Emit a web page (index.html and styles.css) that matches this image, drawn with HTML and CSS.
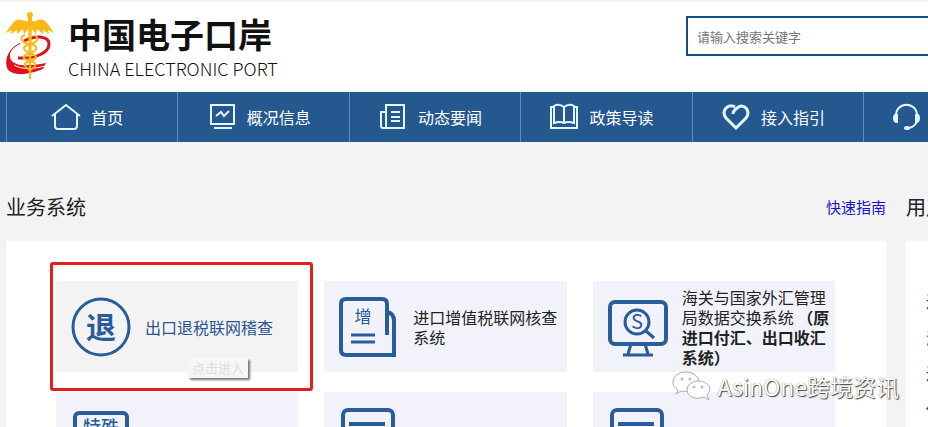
FILE: index.html
```html
<!DOCTYPE html>
<html lang="zh-CN">
<head>
  <meta charset="UTF-8">
  <meta name="viewport" content="width=device-width, initial-scale=1">
  <title>中国电子口岸</title>
  <link rel="stylesheet" href="styles.css">
</head>
<body>

<header class="header wrap">
  <a href="#" class="logo">
    <svg class="logo-mark" viewBox="0 0 48 68" width="48" height="68" aria-hidden="true">
      <path d="M14 32C5 36 2 43 5 48c5 7 18 6 35 3l-3 6C20 64 5 64 1 56-2 46 4 35 14 31z" fill="#e0101c"/>
      <path d="M18 29c12-6 25-5 25 3 0 9-14 15-31 14" fill="none" stroke="#e0101c" stroke-width="3"/>
      <path d="M8 53c8 5 20 4 31 1" fill="none" stroke="#fff" stroke-width="1"/>
      <path d="M24 6c1 4 4 4 8 2 6-2 9 2 16 13l-6-3 1 4-6-4v4l-6-5-1 5-6-7-6 7-1-5-6 5v-4l-6 4 1-4-6 3C7 10 10 6 16 8c4 2 7 2 8-2z" fill="#fbb917"/>
      <circle cx="24" cy="3" r="3" fill="#fbb917"/>
      <path d="M22 5h4l-1 62h-2z" fill="#fbb917"/>
      <path d="M19 23c-7 3-3 8 5 9s9 6 0 9-8 6 0 8 6 6 0 9M29 23c4 4 3 7-5 9s-8 6 0 9 8 6 0 8-6 6 0 9" fill="none" stroke="#fbb917" stroke-width="2"/>
    </svg>
    <span class="logo-text">
      <strong>中国电子口岸</strong>
      <span>CHINA ELECTRONIC PORT</span>
    </span>
  </a>
  <form class="search">
    <input type="text" placeholder="请输入搜索关键字" aria-label="请输入搜索关键字">
  </form>
</header>

<nav class="nav">
  <ul class="nav-list wrap">
    <li><a href="#">
      <svg class="nav-icon" viewBox="0 0 30 28"><path d="M1 13 15 2l14 11M4 11v12q0 3 3 3h16q3 0 3-3V11"/></svg>首页</a></li>
    <li><a href="#">
      <svg class="nav-icon" viewBox="0 0 30 28"><path d="M4 2h23v19H4zM7 25h18M9 13l5-4 3 4 5-5"/></svg>概况信息</a></li>
    <li><a href="#">
      <svg class="nav-icon" viewBox="0 0 30 28"><path d="M8 25V2h18v23H5q-2 0-2-2V9h5M13 9h9M13 14h9M13 18h9"/></svg>动态要闻</a></li>
    <li><a href="#">
      <svg class="nav-icon" viewBox="0 0 30 28"><path d="M5 4H2v21h26V4h-3M15 4Q10 0 5 3v17q6-2 10 0 4-2 10 0V3q-5-3-10 1v16"/></svg>政策导读</a></li>
    <li><a href="#">
      <svg class="nav-icon" viewBox="0 0 30 28"><path class="thick" d="M12 11q0-3 4-6 5-4 9 0 4 5 0 10L15 25 5 15Q1 10 5 5q4-4 9-1"/></svg>接入指引</a></li>
    <li class="service"><a href="#" aria-label="客服">
      <svg class="nav-icon" viewBox="0 0 30 28"><path d="M5 13C5-2 26-2 26 13M26 18q-2 6-8 7"/><path class="solid" d="M6 12v7q-3 0-3-4t3-3zM25 12v7q3 0 3-4t-3-3z"/><ellipse class="solid" cx="16" cy="25" rx="2" ry="1"/></svg></a></li>
  </ul>
</nav>

<div class="content wrap">
  <main>
    <div class="section-title">
      <h2>业务系统</h2>
      <a href="#">快速指南</a>
    </div>
    <div class="panel systems">
      <a href="#" class="system active">
        <svg class="system-icon" viewBox="0 0 60 60">
          <circle class="thin" cx="30" cy="30" r="28"/>
          <text x="30" y="41" font-size="30" font-weight="700">退</text>
        </svg>
        <span>出口退税联网稽查</span>
        <span class="tip">点击进入</span>
      </a>
      <a href="#" class="system">
        <svg class="system-icon" viewBox="0 0 60 60">
          <path d="M48 38V7q0-5-5-5H7Q2 2 2 7v46q0 5 5 5h48V24q0-8-7-9"/>
          <path class="thin" d="M12 38h24M12 45h24"/>
          <text x="24" y="26" font-size="17">增</text>
        </svg>
        <span>进口增值税联网核查系统</span>
      </a>
      <a href="#" class="system">
        <svg class="system-icon" viewBox="0 0 60 60">
          <rect x="2" y="5" width="56" height="42" rx="5"/>
          <path class="thin" d="M23 47l-3 10M37 47l3 10M15 58h30"/>
          <circle class="thin" cx="29" cy="25" r="12"/>
          <path class="thin" d="M38 34l8 7"/>
          <text x="29" y="32" font-size="20">S</text>
        </svg>
        <span>海关与国家外汇管理局数据交换系统 <b>（原进口付汇、出口收汇系统）</b></span>
      </a>
      <a href="#" class="system" aria-label="特殊">
        <svg class="system-icon" viewBox="0 0 60 60">
          <rect x="4" y="5" width="52" height="50" rx="4"/>
          <text x="30" y="26" font-size="18" font-weight="500">特殊</text>
        </svg>
      </a>
      <a href="#" class="system" aria-label="业务系统">
        <svg class="system-icon" viewBox="0 0 60 60">
          <rect x="4" y="2" width="50" height="56" rx="5"/>
          <path d="M10 16h36"/>
        </svg>
      </a>
      <a href="#" class="system" aria-label="业务系统">
        <svg class="system-icon" viewBox="0 0 60 60">
          <rect x="4" y="2" width="50" height="56" rx="5"/>
          <path d="M10 16h36"/>
        </svg>
      </a>
      <div class="highlight"></div>
    </div>
  </main>
  <aside>
    <div class="section-title">
      <h2>用户</h2>
    </div>
    <ul class="panel notices">
      <li>进</li>
      <li>海</li>
      <li>进</li>
      <li>传</li>
    </ul>
  </aside>
</div>

<div class="watermark">
  <svg viewBox="0 0 40 30" width="40" height="30" aria-hidden="true">
    <path d="M14 1C6 1 1 6 1 11c0 4 2 6 5 8l-2 4 5-3q4 1 7 0M14 1c7 0 12 4 13 9"/>
    <path d="M26 10c-6 0-11 4-11 9s7 11 17 7l5 3-2-5c7-7 0-14-9-14z"/>
    <circle cx="10" cy="8" r="1"/><circle cx="18" cy="8" r="1"/>
    <circle cx="22" cy="16" r="1"/><circle cx="30" cy="16" r="1"/>
  </svg>
  <span>AsinOne跨境资讯</span>
</div>

</body>
</html>
```
FILE: styles.css
```css
* {
  box-sizing: border-box;
}
body {
  margin: 0;
  height: 100vh;
  overflow: hidden;
  position: relative;
  background: #f3f3f3;
  color: #222;
  font-family: "Noto Sans CJK SC", sans-serif;
  font-size: 16px;
  line-height: 20px;
}
a {
  color: inherit;
  text-decoration: none;
}
ul {
  margin: 0;
  padding: 0;
  list-style: none;
}

/* the layout runs past the right edge of a narrow window */
.wrap {
  margin-left: 6px;
  margin-right: -278px;
}

/* header */
body::before {
  content: "";
  position: absolute;
  z-index: -1;
  inset: 0 0 auto;
  height: 92px;
  background: #fff;
  border-top: 2px solid #f3f3f3;
}
.header {
  display: flex;
  justify-content: space-between;
  align-items: flex-start;
  height: 92px;
  padding-top: 12px;
}
.logo {
  display: flex;
  gap: 14px;
  color: #111;
}
.logo-text {
  display: flex;
  flex-direction: column;
  gap: 4px;
  padding-top: 4px;
}
.logo-text strong {
  font-size: 34px;
  line-height: 36px;
}
.logo-text span {
  font-family: "Noto Sans CJK SC", sans-serif;
  font-weight: 300;
  font-size: 18px;
  line-height: 24px;
}
.search {
  width: 520px;
  padding-top: 4px;
}
.search input {
  width: 100%;
  height: 40px;
  padding: 0 9px;
  border: 2px solid #154f86;
  background: #fff;
  font-family: inherit;
  font-size: 13px;
}
.search input::placeholder {
  color: #757575;
}

/* nav */
.nav {
  background: #24588f;
  color: #fff;
}
.nav-list {
  display: grid;
  grid-template-columns: repeat(7, 1fr);
}
.nav-list li {
  border-left: 1px solid #5f8fc0;
}
.nav-list a {
  display: flex;
  justify-content: center;
  align-items: center;
  gap: 10px;
  height: 50px;
  padding-right: 10px;
}
.nav-list .service a {
  justify-content: flex-start;
  padding-left: 27px;
}
.nav-icon {
  width: 30px;
  height: 28px;
  fill: none;
  stroke: #e4f6ff;
  stroke-width: 2;
}
.nav-icon .thick {
  stroke-width: 3;
}
.nav-icon .solid {
  fill: #e4f6ff;
}

/* content */
.content {
  display: grid;
  grid-template-columns: minmax(0, 1fr) 300px;
  gap: 20px;
  padding-top: 50px;
}
.section-title {
  display: flex;
  justify-content: space-between;
  align-items: center;
  height: 30px;
  margin-bottom: 19px;
}
.section-title h2 {
  margin: 0;
  font-size: 20px;
  font-weight: 400;
}
.section-title a {
  color: #1a14c4;
  font-size: 15px;
}
.panel {
  background: #fff;
}
.systems {
  position: relative;
  display: grid;
  grid-template-columns: repeat(3, 1fr);
  gap: 20px 26px;
  padding: 40px 51px 40px 50px;
}
.system {
  position: relative;
  display: flex;
  align-items: center;
  gap: 14px;
  min-height: 91px;
  padding: 0 0 0 15px;
  background: #f2f3fa;
}
.system.active {
  background: #f3f3f3;
  color: #2a5592;
}
.system-icon {
  flex: none;
  width: 60px;
  height: 60px;
  fill: none;
  stroke: #285c9a;
  stroke-width: 4;
}
.system-icon .thin {
  stroke-width: 3;
}
.system-icon text {
  fill: #285c9a;
  stroke: none;
  text-anchor: middle;
}
.tip {
  position: absolute;
  left: 132px;
  bottom: -6px;
  padding: 0 4px;
  background: #f6f6f6;
  color: #dcdcdc;
  font-size: 13px;
  box-shadow: 2px 2px 2px #777;
}
.highlight {
  position: absolute;
  left: 44px;
  top: 21px;
  width: 263px;
  height: 129px;
  border: 3px solid #e0201c;
  border-radius: 3px;
  pointer-events: none;
}
.notices {
  height: 100%;
  padding: 42px 20px;
  line-height: 36px;
}

/* watermark */
.watermark {
  position: absolute;
  right: 29px;
  bottom: 25px;
  display: flex;
  align-items: center;
  gap: 5px;
  color: #fff;
  font-size: 23px;
  line-height: 32px;
  text-shadow: 1px 1px 1px #444, 0 0 1px #777;
}
.watermark svg {
  fill: #fff;
  stroke: #aaa;
  stroke-width: 1;
}
```
